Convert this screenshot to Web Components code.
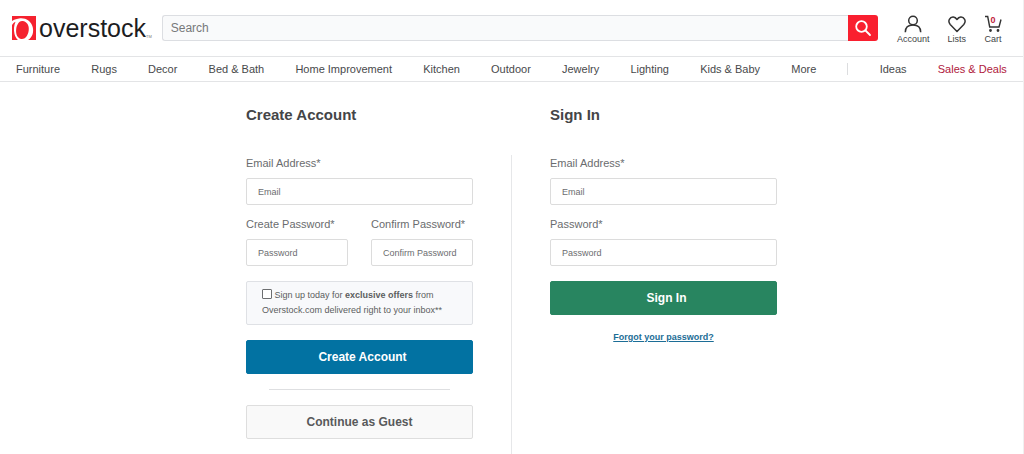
<!DOCTYPE html>
<html lang="en">
<head>
<meta charset="utf-8">
<meta name="viewport" content="width=device-width, initial-scale=1">
<title>Overstock - Sign In</title>
<style>
  body { margin: 0; font-family: "Liberation Sans", Arial, sans-serif; color: #545658; background: #fff; }
</style>
</head>
<body>
<os-page>
  <os-header slot="header"></os-header>
  <os-nav slot="nav"></os-nav>
  <os-create-account></os-create-account>
  <os-divider></os-divider>
  <os-sign-in></os-sign-in>
</os-page>

<script>
class Base extends HTMLElement {
  constructor() {
    super();
    this.attachShadow({ mode: "open" });
  }
  connectedCallback() {
    this.shadowRoot.innerHTML = "<style>*{box-sizing:border-box}</style>" + this.render();
  }
}

customElements.define("os-page", class extends Base {
  render() {
    return `<style>
      :host { display: flex; flex-direction: column; min-height: 100vh; box-sizing: border-box; border-right: 1px solid #f0f0f0; }
      main { flex: 1; display: flex; justify-content: center; gap: 38px; padding: 0 16px; }
    </style>
    <slot name="header"></slot>
    <slot name="nav"></slot>
    <main><slot></slot></main>`;
  }
});

customElements.define("os-logo", class extends Base {
  render() {
    return `<style>
      :host { display: block; }
      a { display: flex; align-items: center; gap: 3px; color: #1d1d1f; text-decoration: none; font-size: 25px; line-height: 25px; }
      svg { display: block; }
      small { font-size: 4px; align-self: flex-end; color: #777; line-height: 8px; margin-left: -3px; }
    </style>
    <a href="#" aria-label="Overstock home">
      <svg width="24" height="24" viewBox="0 0 24 24" aria-hidden="true">
        <path fill="#f5222f" d="M0 0h24v24H16C20.500 21.500 22 16 20.700 11C19 4.500 13 1.500 7 2.500C4 3 1.500 4 0 5z"/>
        <path fill="#f5222f" d="M0 9C1 7.500 2.200 6.500 3.500 5.800C2 9 1.500 14 2.500 18C3.200 20.700 4.500 22.800 6 24H0z"/>
        <path fill="#f5222f" d="M10.500 5C15 5.500 17.500 9.500 16.700 14.500C15.900 20 13 23.300 9.500 23C5.700 22.600 3.500 18.500 4.200 13C4.900 8 7.500 4.600 10.500 5z"/>
      </svg>
      <span>overstock</span><small>TM</small>
    </a>`;
  }
});

customElements.define("os-search", class extends Base {
  render() {
    return `<style>
      :host { display: block; flex: 1; }
      form { display: flex; height: 26px; }
      input { flex: 1; min-width: 0; border: 1px solid #dcdee2; border-right: 0; border-radius: 3px 0 0 3px; background: #f9fafb; padding: 0 8px; font: 12px/16px "Liberation Sans", Arial, sans-serif; color: #545658; outline: 0; }
      input::placeholder { color: #76787a; opacity: 1; }
      button { width: 30px; border: 0; padding: 0; border-radius: 0 3px 3px 0; background: #f91f2f; display: grid; place-items: center; }
    </style>
    <form role="search">
      <input type="search" aria-label="Search" placeholder="Search">
      <button type="button" aria-label="Submit search">
        <svg width="18" height="18" viewBox="0 0 18 18" fill="none" stroke="#fff" stroke-width="1.8" stroke-linecap="round"><circle cx="7.500" cy="7.500" r="5.300"/><path d="M11.500 11.500L16 16"/></svg>
      </button>
    </form>`;
  }
});

customElements.define("os-tool", class extends Base {
  render() {
    return `<style>
      :host { display: block; }
      a { display: flex; flex-direction: column; align-items: center; color: #414345; text-decoration: none; font-size: 9px; line-height: 12px; }
    </style>
    <a href="#"><slot name="icon"></slot><span><slot></slot></span></a>`;
  }
});

customElements.define("os-header", class extends Base {
  render() {
    return `<style>
      :host { display: flex; align-items: center; height: 56px; padding: 0 21px 0 12px; box-sizing: border-box; gap: 10px; }
      .tools { display: flex; gap: 18px; margin-left: 9px; padding-top: 4px; }
      svg { display: block; }
      .cart { position: relative; }
      .count { position: absolute; left: 0; right: 0; top: 0; text-align: center; font-size: 9px; line-height: 10px; font-weight: bold; color: #c22340; }
    </style>
    <os-logo></os-logo>
    <os-search></os-search>
    <div class="tools">
      <os-tool>
        <svg slot="icon" width="18" height="18" viewBox="0 0 18 18" fill="none" stroke="#333" stroke-width="1.500"><circle cx="9" cy="5.500" r="4.300"/><path d="M1.300 17.200C1.300 12.500 4.500 10 9 10s7.700 2.500 7.700 7.200"/></svg>
        Account
      </os-tool>
      <os-tool>
        <svg slot="icon" width="18" height="18" viewBox="0 0 18 18" fill="none" stroke="#333" stroke-width="1.500" stroke-linejoin="round"><path d="M9 16.500L2.200 9.500C-.8 6 2 1.700 5.300 2c1.800.2 2.900 1.300 3.700 2.500C9.800 3.300 10.900 2.200 12.700 2c3.300-.3 6.100 4 3.100 7.500z"/></svg>
        Lists
      </os-tool>
      <os-tool>
        <div slot="icon" class="cart">
          <svg width="18" height="18" viewBox="0 0 18 18" fill="none" stroke="#333" stroke-width="1.400"><path d="M1 1.500h2.700l2 10.500H15L17 4.500"/><circle cx="6.500" cy="15.500" r=".7" fill="#333"/><circle cx="14" cy="15.500" r=".7" fill="#333"/></svg>
          <span class="count">0</span>
        </div>
        Cart
      </os-tool>
    </div>`;
  }
});

customElements.define("os-nav", class extends Base {
  render() {
    const items = ["Furniture", "Rugs", "Decor", "Bed &amp; Bath", "Home Improvement", "Kitchen", "Outdoor", "Jewelry", "Lighting", "Kids &amp; Baby", "More"];
    return `<style>
      :host { display: block; border: 1px solid #e3e4e6; border-width: 1px 0; }
      nav { display: flex; justify-content: space-between; align-items: center; height: 24px; padding: 0 16px; font-size: 11px; line-height: 16px; }
      a { color: #48494b; text-decoration: none; white-space: nowrap; }
      .sale { color: #b0203c; }
      i { width: 1px; height: 12px; background: #dcdddf; }
    </style>
    <nav aria-label="Departments">
      ${items.map(t => `<a href="#">${t}</a>`).join("")}
      <i></i><a href="#">Ideas</a><a class="sale" href="#">Sales &amp; Deals</a>
    </nav>`;
  }
});

customElements.define("os-divider", class extends Base {
  render() {
    return `<style>:host { display: block; width: 1px; background: #e6e7e9; margin-top: 73px; }</style>`;
  }
});

customElements.define("os-field", class extends Base {
  render() {
    const a = n => this.getAttribute(n) || "";
    return `<style>
      :host { display: block; min-width: 0; }
      label { display: block; font-size: 11px; line-height: 16px; margin-bottom: 7px; color: #6a6c6e; white-space: nowrap; }
      input { display: block; width: 100%; height: 27px; border: 1px solid #dcdcdc; border-radius: 2px; padding: 0 11px; background: #fff; color: #545658; font: 9px/12px "Liberation Sans", Arial, sans-serif; outline: 0; }
      input::placeholder { color: #6c6d6f; opacity: 1; }
    </style>
    <label for="f">${a("label")}</label>
    <input id="f" type="${a("type")}" placeholder="${a("placeholder")}">`;
  }
});

customElements.define("os-button", class extends Base {
  render() {
    return `<style>
      :host { display: block; --bg: #0272a2; --fg: #fff; --line: var(--bg); --pad: 0 8px 0 14px; }
      :host([kind="green"]) { --bg: #288560; }
      :host([kind="plain"]) { --bg: #f9f9f9; --fg: #58595b; --line: #dedede; --pad: 0 8px; }
      button { display: block; width: 100%; height: 34px; border: 1px solid var(--line); border-radius: 2px; background: var(--bg); color: var(--fg); font: bold 12px/16px "Liberation Sans", Arial, sans-serif; padding: var(--pad); }
    </style>
    <button type="button"><slot></slot></button>`;
  }
});

const panelStyle = `
  :host { display: block; flex: 0 1 227px; min-width: 0; padding-top: 24px; }
  h2 { margin: 0 0 31px; font-size: 15px; line-height: 18px; color: #444547; }
  form { display: flex; flex-direction: column; gap: 15px; }
  .fields { display: grid; gap: 11px; }`;

customElements.define("os-create-account", class extends Base {
  render() {
    return `<style>${panelStyle}
      .pair { display: grid; grid-template-columns: 1fr 1fr; gap: 23px; }
      .offer { display: block; border: 1px solid #dfe1e5; border-radius: 2px; background: #f8f9fb; padding: 6px 15px; font-size: 9px; line-height: 15px; color: #5c5e60; }
      .offer input { appearance: none; width: 10px; height: 10px; margin: 0; border: 1px solid #6c6e70; border-radius: 1px; background: #fff; vertical-align: -1px; }
      hr { width: 80%; margin: 0 auto; border: 0; height: 1px; background: #dedfe1; }
    </style>
    <h2>Create Account</h2>
    <form>
      <div class="fields">
        <os-field label="Email Address*" type="email" placeholder="Email"></os-field>
        <div class="pair">
          <os-field label="Create Password*" type="password" placeholder="Password"></os-field>
          <os-field label="Confirm Password*" type="password" placeholder="Confirm Password"></os-field>
        </div>
      </div>
      <label class="offer"><input type="checkbox"> Sign up today for <b>exclusive offers</b> from<br>Overstock.com delivered right to your inbox**</label>
      <os-button>Create Account</os-button>
      <hr>
      <os-button kind="plain">Continue as Guest</os-button>
    </form>`;
  }
});

customElements.define("os-sign-in", class extends Base {
  render() {
    return `<style>${panelStyle}
      a { align-self: center; font-size: 9px; line-height: 14px; font-weight: bold; color: #1c6d96; }
    </style>
    <h2>Sign In</h2>
    <form>
      <div class="fields">
        <os-field label="Email Address*" type="email" placeholder="Email"></os-field>
        <os-field label="Password*" type="password" placeholder="Password"></os-field>
      </div>
      <os-button kind="green">Sign In</os-button>
      <a href="#">Forgot your password?</a>
    </form>`;
  }
});
</script>
</body>
</html>
